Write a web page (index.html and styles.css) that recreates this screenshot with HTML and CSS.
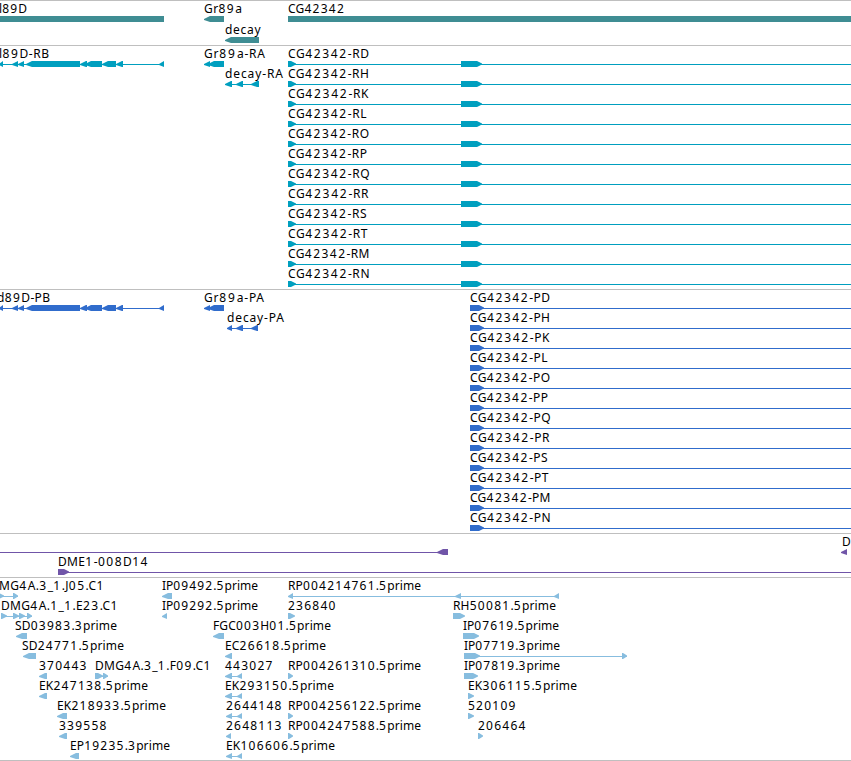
FILE: index.html
```html
<!DOCTYPE html>
<html lang="en">
<head>
<meta charset="utf-8">
<title>Genome tracks</title>
<link rel="stylesheet" href="styles.css">
</head>
<body>
<main class="browser">
  <section class="track track-gene"><svg class="canvas" id="gene"></svg></section>
  <section class="track track-rna"><svg class="canvas" id="rna"></svg></section>
  <section class="track track-protein"><svg class="canvas" id="protein"></svg></section>
  <section class="track track-clone"><svg class="canvas" id="clone"></svg></section>
  <section class="track track-est"><svg class="canvas" id="est"></svg></section>
</main>
<script src="tracks.js"></script>
</body>
</html>
```
FILE: styles.css
```css
body {
  margin: 0;
  background: #fff;
  overflow: hidden;
}

.browser {
  display: flex;
  flex-direction: column;
  width: 851px;
  border-bottom: 1px solid #bfbfbf;
}

.track {
  box-sizing: border-box;
  border-top: 1px solid #bfbfbf;
}

.track-gene { height: 45px; color: #3f8d93; }
.track-rna { height: 244px; color: #009fbf; }
.track-protein { height: 244px; color: #306ccc; }
.track-clone { height: 44px; color: #7055a8; }
.track-est { height: 183px; color: #87bddf; }

.canvas {
  display: block;
  width: 100%;
  height: 100%;
  overflow: hidden;
}

.shape { fill: currentColor; }

.label {
  fill: #000;
  font: 12px "Noto Sans", "Open Sans", sans-serif;
}

.num { letter-spacing: 1.14px; }
```
FILE: tracks.js
```js
// Feature: [lane, label, label start, label end, direction, exons, line start, line end]
const svgNS = "http://www.w3.org/2000/svg";
const body = [[-1, 3], [12, 18], [18, 24], [26, 80], [80, 87], [85, 102], [102, 116], [116, 123], [159, 164]];

const isoforms = (prefix, x, exons, ends) =>
  [..."DHKLOPQRSTMN"].map((c, i) => [i, `CG42342-${prefix}${c}`, x, x + ends[i], "R", exons, x, 851]);
const ends = [81, 81, 80.5, 78.5, 81, 79, 81.5, 80.5, 78.5, 79.5, 81.5, 81.5];

const tracks = {
  gene: [
    [0, "l89D", -1, 27, "", [[0, 164]]],
    [0, "Gr89a", 204, 242, "L", [[204, 224]]],
    [1, "decay", 225, 260.5, "L", [[225, 259]]],
    [0, "CG42342", 288, 345, "", [[288, 851]]]
  ],
  rna: [
    [0, "l89D-RB", -1, 49, "L", body, 0, 164],
    [0, "Gr89a-RA", 204, 265, "L", [[204, 210], [208, 224]]],
    [1, "decay-RA", 225, 283, "L", [[225, 232], [236, 243], [251, 259]], 225, 259],
    ...isoforms("R", 288, [[288, 296], [461, 482]], ends)
  ],
  protein: [
    [0, "d89D-PB", -3, 50, "L", body, 0, 164],
    [0, "Gr89a-PA", 204, 264, "L", [[204, 210], [208, 224]]],
    [1, "decay-PA", 227, 284, "L", [[227, 232], [236, 243], [251, 258]], 227, 258],
    ...isoforms("P", 470, [[470, 484]], ends.map(e => e - 1))
  ],
  clone: [
    [0, "", 0, 0, "L", [[437, 448]], 0, 448],
    [0, "D", 841.5, 850.5, "L", [[841, 847]]],
    [1, "DME1-008D14", 57.5, 148.5, "R", [[58, 69]], 58, 851]
  ],
  est: [
    [0, "MG4A.3_1.J05.C1", -1, 104.5, "R", [[-2, 4], [13, 18]], 0, 18],
    [0, "IP09492.5prime", 161.5, 258, "L", [[162, 172]]],
    [0, "RP004214761.5prime", 288, 421, "L", [[288, 293], [455, 461], [554, 559]], 288, 559],
    [1, "DMG4A.1_1.E23.C1", 0.5, 118.5, "R", [[1, 7], [13, 19], [19, 25], [27, 32]], 1, 32],
    [1, "IP09292.5prime", 161.5, 258, "L", [[162, 167]]],
    [1, "236840", 288, 336.5, "R", [[288, 295]]],
    [1, "RH50081.5prime", 452.5, 556, "R", [[453, 465]]],
    [2, "SD03983.3prime", 15, 117, "L", [[16, 27]]],
    [2, "FGC003H01.5prime", 212.5, 331, "L", [[213, 224]]],
    [2, "IP07619.5prime", 462.5, 559, "R", [[463, 479]]],
    [3, "SD24771.5prime", 22, 124, "L", [[23, 36]]],
    [3, "EC26618.5prime", 225, 326, "L", [[225, 232]]],
    [3, "IP07719.3prime", 463.5, 560, "R", [[464, 480], [622, 627]], 464, 627],
    [4, "370443", 39, 87.5, "L", [[39, 47]]],
    [4, "DMG4A.3_1.F09.C1", 94.5, 211.5, "R", [[95, 103], [103, 108]], 95, 108],
    [4, "443027", 225, 273.5, "L", [[225, 232], [237, 242]], 225, 242],
    [4, "RP004261310.5prime", 288, 421, "R", [[288, 293]]],
    [4, "IP07819.3prime", 463.5, 560, "R", [[464, 478]]],
    [5, "EK247138.5prime", 38.5, 148, "L", [[39, 47]]],
    [5, "EK293150.5prime", 224.5, 334, "L", [[225, 232], [237, 242]], 225, 242],
    [5, "EK306115.5prime", 467.5, 577, "R", [[468, 474]]],
    [6, "EK218933.5prime", 56.5, 166, "L", [[57, 67]]],
    [6, "2644148", 226, 282.5, "L", [[226, 232], [237, 242]], 226, 242],
    [6, "RP004256122.5prime", 288, 421, "R", [[288, 293]]],
    [6, "520109", 468, 516.5, "R", [[468, 474]]],
    [7, "339558", 59, 107.5, "L", [[59, 67]]],
    [7, "2648113", 226, 282.5, "L", [[226, 231]]],
    [7, "RP004247588.5prime", 288, 421, "R", [[288, 293]]],
    [7, "206464", 478, 526.5, "R", [[478, 483]]],
    [8, "EP19235.3prime", 69.5, 170, "L", [[70, 79]]],
    [8, "EK106606.5prime", 225.5, 335, "L", [[226, 232], [237, 242]], 226, 242]
  ]
};

function add(parent, name, attrs) {
  const el = document.createElementNS(svgNS, name);
  for (const key in attrs) el.setAttribute(key, attrs[key]);
  parent.append(el);
  return el;
}

function outline(a, b, dir, y) {
  const head = Math.min(6, b - a);
  if (dir === "L") return `M${a} ${y + 3}v1L${a + head} ${y + 6}H${b}V${y}H${a + head}L${a} ${y + 3}Z`;
  if (dir === "R") return `M${a} ${y}H${b - head + 1}L${b} ${y + 2.5}v1L${b - head + 1} ${y + 6}H${a}Z`;
  return `M${a} ${y}H${b}V${y + 6}H${a}Z`;
}

for (const [id, features] of Object.entries(tracks)) {
  const svg = document.getElementById(id);
  const pitch = id === "gene" ? 21 : 20;
  for (const [lane, label, x, end, dir, exons, from, to] of features) {
    const y = 15 + lane * pitch;
    if (to) add(svg, "rect", { class: "shape", x: from, y: y + 3, width: to - from, height: 1 });
    for (const [a, b] of exons) add(svg, "path", { class: "shape", d: outline(a, b, dir, y) });
    if (!label) continue;
    const start = x + (x % 1 ? 0.5 : 0);
    const text = add(svg, "text", { class: "label", x: start, y: y - 3, textLength: end - start });
    for (const part of label.match(/\d+|\D+/g)) {
      if (/\d/.test(part)) add(text, "tspan", { class: "num" }).textContent = part;
      else text.append(part);
    }
  }
}
```
